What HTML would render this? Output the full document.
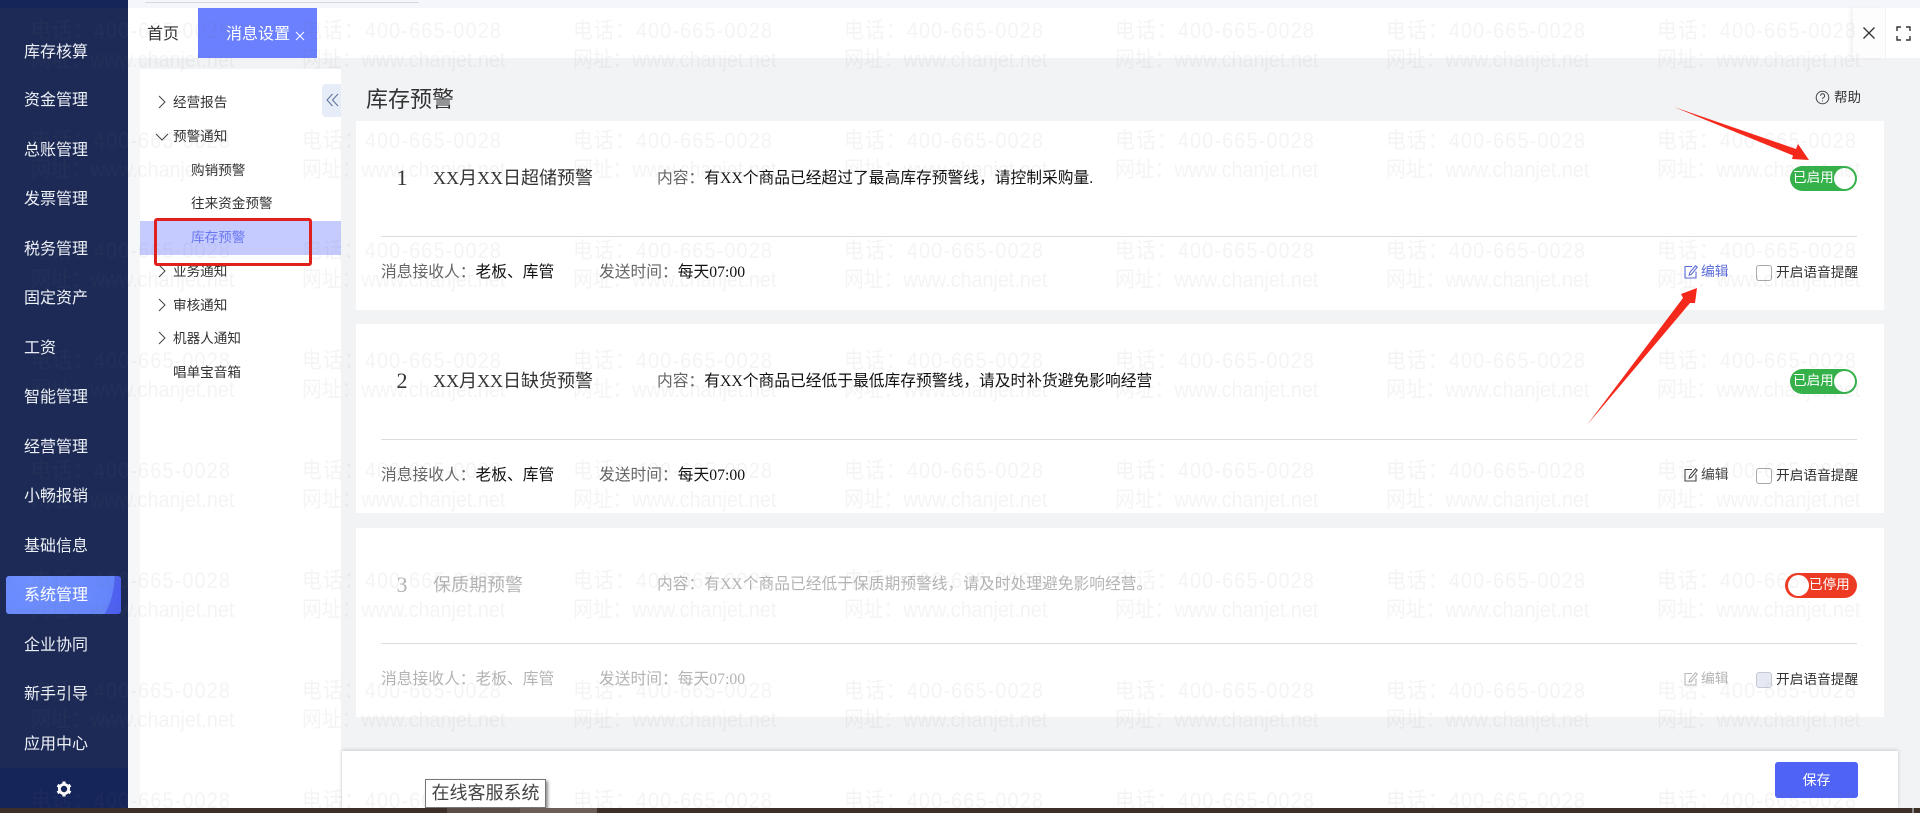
<!DOCTYPE html>
<html lang="zh-CN">
<head>
<meta charset="utf-8">
<title>库存预警</title>
<style>
html,body{margin:0;padding:0;width:1920px;height:813px;overflow:hidden;background:#f2f3f5}
body{position:relative;font-family:"Liberation Sans","Noto Sans CJK SC",sans-serif;color:#333}
.a{position:absolute}
.t{position:absolute;white-space:nowrap;line-height:20px;height:20px}
.side{left:0;top:0;width:128px;height:808px;background:#1c2a55}
.side .t{left:24px;color:#eef1f7;font-size:16px}
.tree .t{font-size:13.6px;color:#333}
.card{left:356px;width:1528px;height:189px;background:#fff}
.card .t{font-family:"Liberation Serif","Noto Sans CJK SC",serif}
.num{left:38px;top:47px;font-size:22px;width:16px;text-align:center;color:#333}
.ttl{left:77px;top:47px;font-size:18px;color:#333}
.cnt{left:301px;top:48px;font-size:15.75px;color:#111}
.cnt span,.rc span,.tm span{color:#666}
.div{left:25px;top:115px;width:1476px;height:1px;background:#dcdcdc}
.rc{left:25px;top:142px;font-size:15.75px;color:#111}
.tm{left:243px;top:142px;font-size:15.75px;color:#111}
.ed{left:1345px;top:141px;font-size:13.8px;color:#444}
.ico{left:1328px;top:144px}
.cb{left:1400px;top:144px;width:14px;height:14px;border:1px solid #a8a8a8;border-radius:3px;background:#fff}
.vo{left:1420px;top:142px;font-size:13.7px;color:#333}
.sw{left:1434px;top:45px;width:67px;height:25px;border-radius:13px;background:#35b14a}
.sw i{position:absolute;right:2px;top:2px;width:21px;height:21px;border-radius:50%;background:#fff}
.sw b{position:absolute;left:3px;top:2px;font-weight:400;font-size:13.6px;line-height:20px;color:#fff;white-space:nowrap;font-family:"Liberation Sans","Noto Sans CJK SC",sans-serif}
.off{left:1429px;width:72px;background:#ee3a23}
.off i{left:3px;right:auto}
.off b{left:24px}
.g .num,.g .ttl,.g .cnt,.g .cnt span,.g .rc,.g .rc span,.g .tm,.g .tm span,.g .ed{color:#b4b4b4}
</style>
</head>
<body>
<!-- top strip -->
<div class="a" style="left:0;top:0;width:1920px;height:8px;background:#f5f6fb"></div>
<div class="a" style="left:145px;top:2px;width:274px;height:1px;background:#d6d8dc"></div>
<!-- gutter beside tree -->
<div class="a" style="left:128px;top:58px;width:12px;height:750px;background:#f6f7f9"></div>
<!-- tab bar -->
<div class="a" style="left:128px;top:8px;width:1725px;height:50px;background:#fff"></div>
<div class="t" style="left:147px;top:25px;font-size:16px;color:#333">首页</div>
<div class="a" style="left:198px;top:8px;width:119px;height:50px;background:#6a80ff"></div>
<div class="t" style="left:226px;top:25px;font-size:16px;color:#fff">消息设置</div>
<svg class="a" style="left:295px;top:31px" width="10" height="10" viewBox="0 0 10 10"><path d="M1 1l8 8M9 1l-8 8" stroke="#fff" stroke-width="1"/></svg>
<div class="a" style="left:1853px;top:8px;width:32px;height:50px;background:#fdfdfd;box-shadow:-3px 0 4px rgba(0,0,0,.05)"></div>
<svg class="a" style="left:1862px;top:26px" width="14" height="14" viewBox="0 0 14 14"><path d="M1.500 1.500l11 11M12.500 1.500l-11 11" stroke="#333" stroke-width="1.300"/></svg>
<div class="a" style="left:1886px;top:8px;width:34px;height:50px;background:#fff"></div>
<svg class="a" style="left:1896px;top:26px" width="15" height="15" viewBox="0 0 15 15" fill="none" stroke="#333" stroke-width="1.400"><path d="M1 5V1h4M10 1h4v4M14 10v4h-4M5 14H1v-4"/></svg>

<!-- sidebar -->
<div class="a side">
  <div class="a" style="left:0;top:0;width:128px;height:8px;background:#15255a"></div>
  <div class="t" style="left:12px;top:-17px;font-size:16px;color:#eef1f7">标准版</div>
  <div class="t" style="top:43px">库存核算</div>
  <div class="t" style="top:91px">资金管理</div>
  <div class="t" style="top:141px">总账管理</div>
  <div class="t" style="top:190px">发票管理</div>
  <div class="t" style="top:240px">税务管理</div>
  <div class="t" style="top:289px">固定资产</div>
  <div class="t" style="top:339px">工资</div>
  <div class="t" style="top:388px">智能管理</div>
  <div class="t" style="top:438px">经营管理</div>
  <div class="t" style="top:487px">小畅报销</div>
  <div class="t" style="top:537px">基础信息</div>
  <div class="a" style="left:6px;top:576px;width:115px;height:38px;border-radius:3px;background:radial-gradient(circle at 30px 0,#6f90ff 0,#6585fb 78px,#4f62f0 79px,#4a5ef0 100%)"></div>
  <div class="t" style="top:586px;color:#fff">系统管理</div>
  <div class="t" style="top:636px">企业协同</div>
  <div class="t" style="top:685px">新手引导</div>
  <div class="t" style="top:735px">应用中心</div>
  <div class="a" style="left:0;top:768px;width:128px;height:40px;background:#15255a"></div>
  <svg class="a" style="left:55px;top:780px" width="18" height="18" viewBox="0 0 18 18"><g stroke="#fff" stroke-width="3.200" stroke-linecap="butt"><path d="M9 1.500v3M9 13.500v3M2.500 5.200l2.600 1.500M12.900 11.300l2.600 1.500M2.500 12.800l2.600-1.500M12.900 6.700l2.600-1.500"/></g><circle cx="9" cy="9" r="4.600" fill="none" stroke="#fff" stroke-width="2.800"/></svg>
</div>

<!-- tree panel -->
<div class="a" style="left:140px;top:69px;width:201px;height:739px;background:#fff"></div>
<div class="a" style="left:322px;top:84px;width:19px;height:33px;background:#e6edf8;border-radius:4px 0 0 4px"></div>
<svg class="a" style="left:326px;top:93px" width="13" height="14" viewBox="0 0 13 14" fill="none" stroke="#5c6f95" stroke-width="1"><path d="M6.500 1L1 7l5.500 6M12 1L6.500 7l5.500 6"/></svg>
<div class="tree">
  <svg class="a" style="left:157px;top:95px" width="10" height="14" viewBox="0 0 10 14" fill="none" stroke="#444"><path d="M2 1l6 6-6 6"/></svg>
  <div class="t" style="left:173px;top:93px">经营报告</div>
  <svg class="a" style="left:155px;top:132px" width="14" height="10" viewBox="0 0 14 10" fill="none" stroke="#444"><path d="M1 2l6 6 6-6"/></svg>
  <div class="t" style="left:173px;top:127px">预警通知</div>
  <div class="t" style="left:191px;top:161px">购销预警</div>
  <div class="t" style="left:191px;top:194px">往来资金预警</div>
  <div class="a" style="left:140px;top:221px;width:201px;height:34px;background:#c5cbff"></div>
  <div class="t" style="left:191px;top:228px;color:#6a78f0">库存预警</div>
  <svg class="a" style="left:157px;top:264px" width="10" height="14" viewBox="0 0 10 14" fill="none" stroke="#444"><path d="M2 1l6 6-6 6"/></svg>
  <div class="t" style="left:173px;top:262px">业务通知</div>
  <svg class="a" style="left:157px;top:298px" width="10" height="14" viewBox="0 0 10 14" fill="none" stroke="#444"><path d="M2 1l6 6-6 6"/></svg>
  <div class="t" style="left:173px;top:296px">审核通知</div>
  <svg class="a" style="left:157px;top:331px" width="10" height="14" viewBox="0 0 10 14" fill="none" stroke="#444"><path d="M2 1l6 6-6 6"/></svg>
  <div class="t" style="left:173px;top:329px">机器人通知</div>
  <div class="t" style="left:173px;top:363px">唱单宝音箱</div>
  <div class="a" style="left:154px;top:218px;width:152px;height:42px;border:3px solid #e0201c;border-radius:3px"></div>
</div>

<!-- header -->
<div class="t" style="left:366px;top:86px;height:28px;line-height:28px;font-size:22px;color:#333">库存预警</div>
<svg class="a" style="left:1815px;top:90px" width="15" height="15" viewBox="0 0 15 15" fill="none" stroke="#444"><circle cx="7.500" cy="7.500" r="6.300"/><path d="M5.600 5.800a2 2 0 1 1 3 1.700c-.7.400-1.100.8-1.100 1.600" /><path d="M7.500 10.500v1"/></svg>
<div class="t" style="left:1834px;top:88px;font-size:13.500px;color:#333">帮助</div>

<!-- card 1 -->
<div class="a card" style="top:121px">
  <div class="t num">1</div>
  <div class="t ttl">XX月XX日超储预警</div>
  <div class="t cnt"><span>内容：</span>有XX个商品已经超过了最高库存预警线，请控制采购量.</div>
  <div class="a sw"><b>已启用</b><i></i></div>
  <div class="a div"></div>
  <div class="t rc"><span>消息接收人：</span>老板、库管</div>
  <div class="t tm"><span>发送时间：</span>每天07:00</div>
  <svg class="a ico" width="14" height="14" viewBox="0 0 14 14" fill="none" stroke="#5b6bd8" stroke-width="1.100"><path d="M8 1.500H1v11.500h11V6.500"/><path d="M11.500.800l1.700 1.400-5.700 7-2.300 1 .5-2.500z"/></svg>
  <div class="t ed" style="color:#5b6bd8">编辑</div>
  <div class="a cb"></div>
  <div class="t vo">开启语音提醒</div>
</div>

<!-- card 2 -->
<div class="a card" style="top:324px">
  <div class="t num">2</div>
  <div class="t ttl">XX月XX日缺货预警</div>
  <div class="t cnt"><span>内容：</span>有XX个商品已经低于最低库存预警线，请及时补货避免影响经营</div>
  <div class="a sw"><b>已启用</b><i></i></div>
  <div class="a div"></div>
  <div class="t rc"><span>消息接收人：</span>老板、库管</div>
  <div class="t tm"><span>发送时间：</span>每天07:00</div>
  <svg class="a ico" width="14" height="14" viewBox="0 0 14 14" fill="none" stroke="#444" stroke-width="1.100"><path d="M8 1.500H1v11.500h11V6.500"/><path d="M11.500.800l1.700 1.400-5.700 7-2.300 1 .5-2.500z"/></svg>
  <div class="t ed">编辑</div>
  <div class="a cb"></div>
  <div class="t vo">开启语音提醒</div>
</div>

<!-- card 3 -->
<div class="a card g" style="top:528px">
  <div class="t num" style="top:47px">3</div>
  <div class="t ttl" style="top:47px">保质期预警</div>
  <div class="t cnt" style="top:47px"><span>内容：</span>有XX个商品已经低于保质期预警线，请及时处理避免影响经营。</div>
  <div class="a sw off"><b>已停用</b><i></i></div>
  <div class="a div"></div>
  <div class="t rc"><span>消息接收人：</span>老板、库管</div>
  <div class="t tm"><span>发送时间：</span>每天07:00</div>
  <svg class="a ico" width="14" height="14" viewBox="0 0 14 14" fill="none" stroke="#b8b8b8" stroke-width="1.100"><path d="M8 1.500H1v11.500h11V6.500"/><path d="M11.500.800l1.700 1.400-5.700 7-2.300 1 .5-2.500z"/></svg>
  <div class="t ed">编辑</div>
  <div class="a cb" style="background:#e6e9f4;border-color:#c6c9d4"></div>
  <div class="t vo">开启语音提醒</div>
</div>

<!-- footer bar -->
<div class="a" style="left:342px;top:751px;width:1556px;height:57px;background:#fff;box-shadow:0 -1px 4px rgba(0,0,0,.16)"></div>
<div class="a" style="left:1775px;top:762px;width:83px;height:36px;border-radius:3px;background:#4f63f5;color:#fff;font-size:14px;line-height:36px;text-align:center">保存</div>

<!-- watermark -->
<svg class="a" style="left:0;top:0;pointer-events:none" width="1920" height="813">
  <defs>
    <pattern id="wm" x="31" y="0" width="271" height="110" patternUnits="userSpaceOnUse">
      <g transform="scale(.9 1)" font-size="22" fill="#666" fill-opacity=".075" font-family="Liberation Sans, Noto Sans CJK SC, sans-serif">
        <text x="0" y="38" letter-spacing="1.300">电话：400-665-0028</text>
        <text x="0" y="67">网址：www.chanjet.net</text>
      </g>
    </pattern>
  </defs>
  <rect width="1920" height="813" fill="url(#wm)"/>
</svg>

<!-- tooltip -->
<div class="a" style="left:425px;top:779px;width:119px;height:27px;background:#fff;border:1px solid #777;box-shadow:2px 2px 3px rgba(0,0,0,.45);font-size:18px;line-height:27px;text-align:center;color:#444;white-space:nowrap">在线客服系统</div>

<!-- bottom strip -->
<div class="a" style="left:0;top:808px;width:1920px;height:5px;background:#3e3028"></div>
<div class="a" style="left:447px;top:808px;width:73px;height:5px;background:#5a4e46"></div>
<div class="a" style="left:520px;top:808px;width:77px;height:5px;background:#6a5e56"></div>
<div class="a" style="left:1912px;top:808px;width:2px;height:5px;background:#8a8a8a"></div>

<!-- annotation arrows -->
<svg class="a" style="left:0;top:0;pointer-events:none" width="1920" height="813">
  <path d="M1674 107L1796 149L1798 144L1809 160L1792 159L1793 155.500Z" fill="#f5281c"/>
  <path d="M1587 425L1683 298L1681 294L1697 288L1695 303L1690 303Z" fill="#f5281c"/>
</svg>
</body>
</html>
